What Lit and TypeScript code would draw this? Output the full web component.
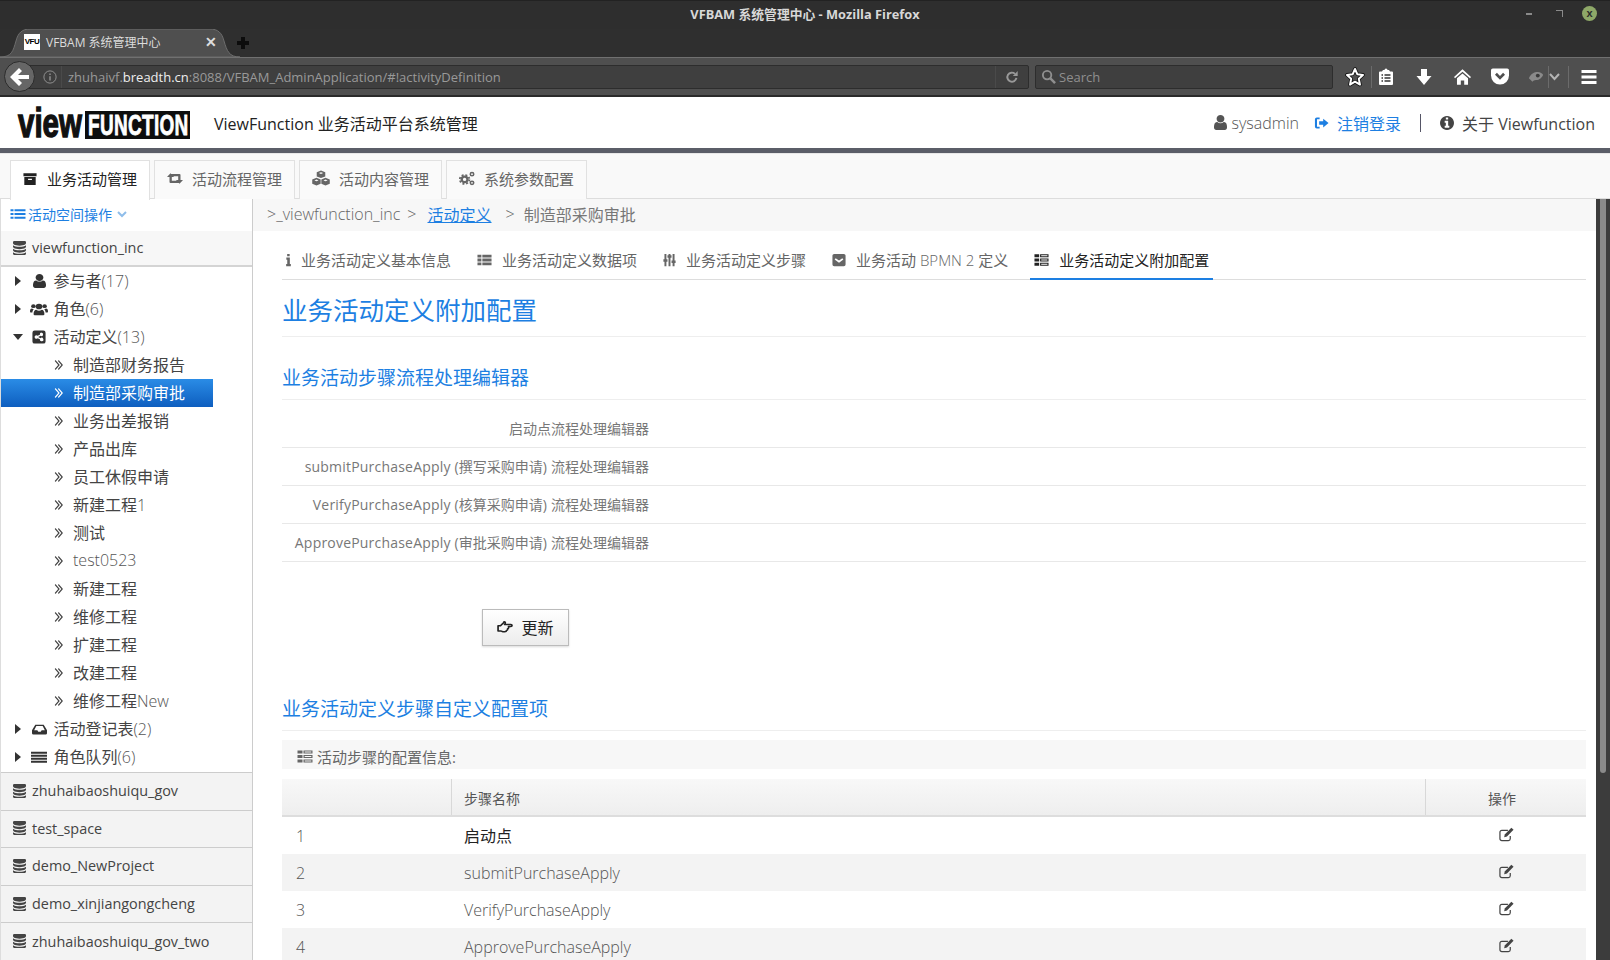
import { LitElement, css, html, svg } from "lit";
import { customElement } from "lit/decorators.js";

// font awesome 4 outlines, viewBox cropped to the glyph; rougher ones on a 16 grid
const G = "0 0 16 16";
const ICONS: Record<string, [string, unknown]> = {
  user: ["256 128 1280 1536", svg`<path d="M1536 1399q0 109-62.5 187t-150.5 78h-854q-88 0-150.5-78t-62.5-187q0-85 8.5-160.5t31.5-152 58.5-131 94-89 134.5-34.5q131 128 313 128t313-128q76 0 134.5 34.5t94 89 58.5 131 31.5 152 8.5 160.5zm-256-887q0 159-112.5 271.5t-271.5 112.5-271.5-112.5-112.5-271.5 112.5-271.5 271.5-112.5 271.5 112.5 112.5 271.5z"/>`],
  database: ["128 128 1536 1536", svg`<path d="M896 768q237 0 443-43t325-127v170q0 69-103 128t-280 93.5-385 34.5-385-34.5-280-93.5-103-128v-170q119 84 325 127t443 43zm0 768q237 0 443-43t325-127v170q0 69-103 128t-280 93.5-385 34.5-385-34.5-280-93.5-103-128v-170q119 84 325 127t443 43zm0-384q237 0 443-43t325-127v170q0 69-103 128t-280 93.5-385 34.5-385-34.5-280-93.5-103-128v-170q119 84 325 127t443 43zm0-1152q208 0 385 34.5t280 93.5 103 128v128q0 69-103 128t-280 93.5-385 34.5-385-34.5-280-93.5-103-128v-128q0-69 103-128t280-93.5 385-34.5z"/>`],
  info: ["128 128 1536 1536", svg`<path d="M1152 1376v-160q0-14-9-23t-23-9h-96v-512q0-14-9-23t-23-9h-320q-14 0-23 9t-9 23v160q0 14 9 23t23 9h96v320h-96q-14 0-23 9t-9 23v160q0 14 9 23t23 9h448q14 0 23-9t9-23zm-128-896v-160q0-14-9-23t-23-9h-192q-14 0-23 9t-9 23v160q0 14 9 23t23 9h192q14 0 23-9t9-23zm640 416q0 209-103 385.5t-279.5 279.5-385.5 103-385.5-103-279.5-279.5-103-385.5 103-385.5 279.5-279.5 385.5-103 385.5 103 279.5 279.5 103 385.5z"/>`],
  dbl: ["300 440 1080 1040", svg`<path d="M979 960q0 13-10 23l-466 466q-10 10-23 10t-23-10l-50-50q-10-10-10-23t10-23l393-393-393-393q-10-10-10-23t10-23l50-50q10-10 23-10t23 10l466 466q10 10 10 23zm384 0q0 13-10 23l-466 466q-10 10-23 10t-23-10l-50-50q-10-10-10-23t10-23l393-393-393-393q-10-10-10-23t10-23l50-50q10-10 23-10t23 10l466 466q10 10 10 23z"/>`],
  "i": ["0 0 6 16", svg`<path d="M1.4 1h3v2.800h-3zM.4 5.200h4.200v7.400h1.200V15H.2v-2.400h1.300v-5H.4z"/>`],
  archive: [G, svg`<path d="M.5 1.500h15v3.300H.5zM1.500 5.800h13v9h-13zm4.300 1.800v1.400h4.400V7.600z" fill-rule="evenodd"/>`],
  retweet: [G, svg`<path d="M3.500 2.500L7 6.500H4.800v4H10l2 2.300H3.500a1 1 0 0 1-1-1V6.500H0zM12.500 13.500L9 9.500h2.200v-4H6L4 3.200h8.500a1 1 0 0 1 1 1v5.300H16z"/>`],
  cubes: [G, svg`<path d="M8 .4l3.800 1.600v4L8 7.600 4.200 6V2zM4 7.400l3.700 1.500v4L4 14.600.2 12.900v-4zM12 7.400l3.800 1.500v4L12 14.600l-3.700-1.700v-4z"/><path d="M8 2.100l1.900.8L8 3.700l-1.900-.8zM4 9l1.800.8L4 10.600l-1.900-.8zM12 9l1.900.8-1.900.8-1.800-.8z" fill="#fafafa"/>`],
  cogs: [G, svg`<circle cx="5.600" cy="9" r="2.900" fill="none" stroke="currentColor" stroke-width="2.400"/><circle cx="5.600" cy="9" r="4.800" fill="none" stroke="currentColor" stroke-width="1.800" stroke-dasharray="2 1.800"/><circle cx="13" cy="3.400" r="1.700" fill="none" stroke="currentColor" stroke-width="1.600"/><circle cx="13" cy="12.600" r="1.700" fill="none" stroke="currentColor" stroke-width="1.600"/>`],
  users: [G, svg`<circle cx="8" cy="4.800" r="3"/><circle cx="3" cy="4.400" r="2"/><circle cx="13" cy="4.400" r="2"/><path d="M4 14c-.6-.2-.8-.6-.8-1.300 0-2.600.9-4.400 2.400-4.400.7.6 1.500.9 2.400.9s1.700-.3 2.400-.9c1.500 0 2.400 1.800 2.400 4.400 0 .7-.2 1.100-.8 1.300zM0 9.800c0-1.800.5-3 1.800-3 .5.5 1 .7 1.700.7-.7.7-1.300 2-1.400 3.800H.8c-.5 0-.8-.5-.8-1.500zM16 9.800c0-1.800-.5-3-1.800-3-.5.5-1 .7-1.700.7.7.7 1.300 2 1.400 3.800h1.300c.5 0 .8-.5.8-1.500z"/>`],
  share: [G, svg`<path fill-rule="evenodd" d="M3 .5h10A2.500 2.500 0 0 1 15.500 3v10a2.500 2.500 0 0 1-2.500 2.500H3A2.500 2.500 0 0 1 .5 13V3A2.500 2.500 0 0 1 3 .5zM11 3a2 2 0 0 0-2 2.300L6.400 6.600a2 2 0 1 0 0 2.800L9 10.700a2 2 0 1 0 .7-1.400L7.100 8l2.600-1.300A2 2 0 1 0 11 3z"/>`],
  inbox: [G, svg`<path fill-rule="evenodd" d="M3.500 2h9L16 9v3.500a1.500 1.500 0 0 1-1.500 1.500h-13A1.500 1.500 0 0 1 0 12.500V9zM4.600 3.800L2.300 8.800h3.400l1 2h2.600l1-2h3.400l-2.300-5z"/>`],
  lines: [G, svg`<path d="M0 2h16v2.400H0zM0 5.400h16v2.400H0zM0 8.800h16v2.400H0zM0 12.200h16v2.400H0z"/>`],
  list: [G, svg`<path d="M.5 2.500h3v2.400h-3zM4.500 2.500h11v2.400h-11zM.5 6.800h3v2.400h-3zM4.500 6.800h11v2.400h-11zM.5 11.100h3v2.400h-3zM4.500 11.100h11v2.400h-11z"/>`],
  thlist: [G, svg`<path d="M.5 2h4.200v3.200H.5zM5.700 2h9.800v3.200H5.700zM.5 6.400h4.200v3.200H.5zM5.700 6.400h9.800v3.200H5.700zM.5 10.800h4.200V14H.5zM5.700 10.800h9.800V14H5.700z"/>`],
  sliders: [G, svg`<path d="M1.800 1h2.400v6h1.300v3H4.200v5H1.800v-5H.5V7h1.300zM6.800 1h2.400v1.500h1.300v3H9.200V15H6.800V5.500H5.500v-3h1.300zM11.800 1h2.400v7.500h1.300v3h-1.300V15h-2.400v-3.500h-1.300v-3h1.300z"/>`],
  pocketbox: [G, svg`<path fill-rule="evenodd" d="M2.500 1h11A2 2 0 0 1 15.500 3v10a2 2 0 0 1-2 2h-11a2 2 0 0 1-2-2V3a2 2 0 0 1 2-2zM4.200 6L3 7.300 8 11l5-3.700L11.800 6 8 8.700z"/>`],
  tasksel: [G, svg`<path fill-rule="evenodd" d="M.5 1.500h5v3.400h-5zM.5 6.300h5v3.400h-5zM.5 11.100h5v3.400h-5zM6.500 1.500h9v3.400h-9zM7.700 2.700v1h6.600v-1zM6.500 6.300h9v3.400h-9zM7.700 7.500v1h6.600v-1zM6.500 11.100h9v3.400h-9zM7.700 12.300v1h6.600v-1z"/>`],
  edit: [G, svg`<path fill="none" stroke="currentColor" stroke-width="1.300" d="M12 9.500v3a2 2 0 0 1-2 2H3a2 2 0 0 1-2-2V5.500a2 2 0 0 1 2-2h6.500"/><path d="M13.200.8l2.300 2.200-7 7.200-3 .7.600-3z"/>`],
  hand: [G, svg`<path fill="none" stroke="currentColor" stroke-width="1.600" stroke-linejoin="round" d="M1 7.200h2.300l2.400-2.600c.6-.8.500-1.800 1.200-1.800s1.200.9.700 2.100l-.5 1h6c1.400 0 1.400 2 0 2h-2.300c.4 1.500-.1 2.300-.8 2.500.2 1-.3 1.700-1 1.800-.1.800-.7 1.300-1.600 1.300H5.500c-1 0-1.500-.8-2.200-.8H1z"/>`],
  signout: [G, svg`<path d="M6 1.800v2H3.200v8.400H6v2H3A2 2 0 0 1 1 12.200V3.800a2 2 0 0 1 2-2zM9.800 3L15.500 8l-5.700 5V10H5.500V6h4.300z"/>`],
};

const ic = (name: string, w = 14, h = 14) => {
  const [vb, body] = ICONS[name];
  return html`<svg class="ic" width=${w} height=${h} viewBox=${vb} preserveAspectRatio="none" fill="currentColor">${body}</svg>`;
};

// latin runs are the light weight of the page font, chinese stays regular
const mix = (text: string) =>
  text.split(/([\x20-\x7e]+)/).map((part, i) => (i % 2 ? html`<span class="lat">${part}</span>` : part));

const MAIN_TABS = [
  ["archive", "业务活动管理", 14, 14],
  ["retweet", "活动流程管理", 16, 15],
  ["cubes", "活动内容管理", 18, 17],
  ["cogs", "系统参数配置", 16, 15],
] as const;

const CHILDREN = ["制造部财务报告", "制造部采购审批", "业务出差报销", "产品出库", "员工休假申请", "新建工程1", "测试", "test0523", "新建工程", "维修工程", "扩建工程", "改建工程", "维修工程New"];
const SPACES = ["zhuhaibaoshuiqu_gov", "test_space", "demo_NewProject", "demo_xinjiangongcheng", "zhuhaibaoshuiqu_gov_two"];

const INNER_TABS = [
  ["i", "业务活动定义基本信息", 5],
  ["thlist", "业务活动定义数据项", 15],
  ["sliders", "业务活动定义步骤", 13],
  ["pocketbox", "业务活动 BPMN 2 定义", 14],
  ["tasksel", "业务活动定义附加配置", 15],
] as const;

const EDITORS = ["启动点流程处理编辑器", "submitPurchaseApply (撰写采购申请) 流程处理编辑器", "VerifyPurchaseApply (核算采购申请) 流程处理编辑器", "ApprovePurchaseApply (审批采购申请) 流程处理编辑器"];
const STEPS = ["启动点", "submitPurchaseApply", "VerifyPurchaseApply", "ApprovePurchaseApply"];

@customElement("app-root")
export class AppRoot extends LitElement {
  static styles = css`
    :host {
      display: block;
      width: 1610px;
      height: 960px;
      overflow: hidden;
      background: #fff;
      color: #444;
      font-family: "Open Sans", "Noto Sans CJK SC", sans-serif;
      font-size: 14px;
    }
    .ic { flex: none; display: block; }
    .lat { font-weight: 300; }

    /* firefox chrome */
    .title {
      height: 29px;
      background: #2e2e2e;
      border-top: 1px solid #222;
      box-sizing: border-box;
      padding-bottom: 4px;
      display: flex;
      align-items: center;
      justify-content: center;
      position: relative;
      color: #d8d8d8;
      font-size: 12.8px;
      font-weight: 700;
    }
    .winbtns { position: absolute; right: 13px; top: 5px; display: flex; align-items: center; gap: 19px; color: #999; }
    .winbtns i { display: block; width: 6px; height: 2px; background: #8a8a8a; margin-right: 5px; }
    .winbtns b.rs { display: block; width: 6px; height: 6px; border-top: 1px solid #8a8a8a; border-right: 1px solid #8a8a8a; }
    .close { width: 15px; height: 15px; border-radius: 50%; background: #8ea868; color: #2b2b2b; font: 700 11px/15px "Liberation Sans", sans-serif; text-align: center; }
    .strip { height: 28px; background: #2f2f2f; display: flex; position: relative; }
    .tabshape { position: absolute; left: 0; top: 0; }
    .ftab { position: relative; width: 228px; display: flex; align-items: center; padding: 0 0 2px 24px; box-sizing: border-box; gap: 6px; color: #dcdcdc; font-size: 12px; height: 28px; }
    .fav { width: 16px; height: 16px; background: #fff; color: #000; font: 900 8px/16px "Liberation Sans", sans-serif; text-align: center; letter-spacing: -0.5px; }
    .ftab .x { margin-left: auto; margin-right: 11px; color: #ddd; font: 700 14px/1 "Liberation Sans", sans-serif; }
    .plus { align-self: center; margin-left: 9px; width: 12px; height: 12px; position: relative; }
    .plus::before, .plus::after { content: ""; position: absolute; background: #0c0c0c; }
    .plus::before { left: 4px; top: 0; width: 4px; height: 12px; }
    .plus::after { left: 0; top: 4px; width: 12px; height: 4px; }
    .nav {
      height: 40px;
      box-sizing: border-box;
      background: #4f4f4f;
      border-top: 1px solid #707070;
      border-bottom: 2px solid #2a2a2a;
      display: flex;
      align-items: center;
      position: relative;
      color: #f2f2f2;
      padding-left: 20px;
    }
    .back { position: absolute; left: 4px; top: 3px; width: 31px; height: 31px; box-sizing: border-box; border-radius: 50%; background: #666; border: 1px solid #2c2c2c; display: flex; align-items: center; justify-content: center; color: #fff; }
    .field { height: 24px; box-sizing: border-box; background: #3f3f3f; border: 1px solid #2d2d2d; border-radius: 2px; display: flex; align-items: center; }
    .url { width: 1009px; padding-left: 22px; font-size: 13px; color: #999; }
    .url .ifo { color: #9a9a9a; margin-right: 4px; }
    .url .addr { white-space: nowrap; }
    .url .host { color: #eee; }
    .url .vsep { width: 1px; height: 22px; background: #4a4a4a; margin-right: 6px; }
    .url .rel { margin-left: auto; width: 33px; height: 22px; border-left: 1px solid #4a4a4a; display: flex; align-items: center; justify-content: center; color: #999; box-sizing: border-box; }
    .search { width: 298px; margin-left: 6px; padding-left: 5px; gap: 3px; color: #8f8f8f; font-size: 13px; }
    .tools { display: grid; grid-template-columns: 32px 1px 28px 48px 28px 48px 24px 1px 10px 9px 1px 40px; margin-left: 6px; height: 100%; align-items: center; justify-items: center; }
    .tools .s { width: 1px; height: 22px; background: #6b6b6b; }

    /* app header */
    .head { height: 51px; display: flex; align-items: center; padding-left: 18px; background: #fff; }
    .logo { width: 172px; height: 32px; display: flex; align-items: flex-end; font-family: "Liberation Sans", sans-serif; font-weight: 700; }
    .logo .v { width: 67px; color: #111; font-size: 29.5px; line-height: 30px; transform: translateY(5px) scaleY(1.4); transform-origin: bottom; -webkit-text-stroke: 1px #111; }
    .logo .f { width: 105px; height: 28px; box-sizing: border-box; padding-left: 3px; background: #0d0d0d; color: #fff; font-size: 19px; line-height: 28px; letter-spacing: 0.3px; }
    .logo .f span { display: block; transform: scaleY(1.6); transform-origin: center; -webkit-text-stroke: 0.5px #fff; }
    .apptitle { margin-left: 24px; font-size: 16px; color: #222; }
    .right { margin-left: auto; padding-right: 15px; display: flex; align-items: center; font-size: 16px; color: #555; }
    .right .lat { font-weight: 300; }
    .right .sys { margin-left: 5px; margin-right: 15px; }
    .right .out { color: #1d7fe2; display: flex; align-items: center; gap: 8px; }
    .right .pipe { width: 1px; height: 18px; background: #556; margin: 0 19px; }
    .right .about { display: flex; align-items: center; gap: 8px; color: #444; }
    .bar { height: 5px; background: #5b5e68; }

    .mtabs { height: 46px; box-sizing: border-box; background: #f9f9f9; border-top: 1px solid #e8e8e8; border-bottom: 1px solid #ddd; padding: 6px 0 0 10px; display: flex; gap: 4px; }
    .mtab { height: 39px; box-sizing: border-box; border: 1px solid #e1e1e1; border-bottom: none; display: flex; align-items: center; padding: 0 12px 3px; gap: 9px; font-size: 15px; color: #666; background: #fafafa; }
    .mtab.on { background: #fff; color: #222; height: 40px; z-index: 1; padding-bottom: 4px; gap: 10px; }

    .body { display: flex; height: 761px; }
    .side { width: 253px; flex: none; box-sizing: border-box; border-right: 1px solid #ccc; border-left: 1px solid #ddd; display: flex; flex-direction: column; }
    .ops { height: 32px; box-sizing: border-box; padding: 0 0 2px 9px; display: flex; align-items: center; gap: 2px; color: #1d7fe2; font-size: 14px; }
    .ops .chev { margin-left: 3px; color: #8fbdea; }
    .ws { height: 36px; box-sizing: border-box; background: #f7f7f7; border-bottom: 2px solid #d4d4d4; display: flex; align-items: center; padding: 0 0 1px 12px; gap: 6px; font-size: 14.4px; color: #444; }
    .tree { padding-bottom: 1px; }
    .row { height: 28px; display: flex; align-items: center; font-size: 16px; color: #444; }
    .row > span:last-child { margin-top: -2px; }
    .row .lat { color: #555; }
    .caret { width: 0; height: 0; margin-left: 14px; border-left: 6px solid #333; border-top: 5px solid transparent; border-bottom: 5px solid transparent; }
    .caret.open { margin-left: 12px; margin-right: -2px; border-top: 6px solid #333; border-left: 5px solid transparent; border-right: 5px solid transparent; border-bottom: none; }
    .ricon { width: 16px; margin-left: 10px; margin-right: 6.5px; display: flex; justify-content: center; color: #333; }
    .kid { padding-left: 53px; gap: 10px; }
    .kid .ic { color: #444; }
    .kid.sel { width: 212px; box-sizing: border-box; background: linear-gradient(#2a8ce6, #0e5ebf); color: #fff; }
    .kid.sel .ic { color: #fff; }
    .spaces { flex: 1; display: flex; flex-direction: column; }
    .space { flex: 1; background: #f3f3f3; border-top: 1px solid #ccc; display: flex; align-items: center; padding: 0 0 1px 12px; gap: 6px; font-size: 14.4px; color: #444; }

    .main { flex: 1; min-width: 0; display: flex; flex-direction: column; }
    .crumb { height: 32px; flex: none; box-sizing: border-box; background: #f7f7f7; display: flex; align-items: center; padding: 0 0 3px 14px; font-size: 16px; color: #666; }
    .crumb a { color: #1d7fe2; text-decoration: underline; margin: 0 14px 0 11px; }
    .crumb .arrow { margin-left: 7px; }
    .crumb .last { margin-left: 9px; color: #777; }
    .content { padding: 0 10px 0 29px; }
    .itabs { height: 49px; box-sizing: border-box; border-bottom: 1px solid #ddd; display: flex; gap: 18px; }
    .itab { height: 49px; box-sizing: border-box; display: flex; align-items: center; padding: 8px 4px 0; gap: 10px; font-size: 15px; color: #666; }
    .itab.on { color: #222; border-bottom: 2px solid #1d7fe2; padding-top: 10px; }
    h1 { margin: 0; height: 57px; box-sizing: border-box; border-bottom: 1px solid #eee; font-size: 25.5px; font-weight: 400; line-height: 60px; color: #1d7fe2; }
    h3 { margin: 0; box-sizing: border-box; border-bottom: 1px solid #eee; font-size: 19px; font-weight: 400; line-height: 26px; padding-bottom: 8px; color: #1d7fe2; }
    h3.a { padding-top: 28px; }
    h3.b { padding-top: 50px; }
    .form { margin-top: 10px; }
    .frow { height: 38px; box-sizing: border-box; border-bottom: 1px solid #e8e8e8; display: flex; align-items: center; justify-content: flex-start; color: #777; }
    .frow div { width: 367px; text-align: right; padding-bottom: 1px; }
    .frow .lat { font-weight: 400; letter-spacing: 0.2px; }
    .update { margin: 47px 0 0 200px; width: 87px; height: 37px; box-sizing: border-box; padding-bottom: 2px; border: 1px solid #bbb; background: linear-gradient(#fff, #ececec); box-shadow: 0 1px 2px rgba(0, 0, 0, 0.15); display: flex; align-items: center; justify-content: center; gap: 7px; font-size: 16px; color: #222; }
    .cap { margin-top: 9px; height: 29px; box-sizing: border-box; background: #f7f7f7; display: flex; align-items: center; padding: 4px 0 0 15px; gap: 4px; font-size: 15px; color: #666; }
    .grid { margin-top: 10px; }
    .tr { display: grid; grid-template-columns: 169px 1fr 161px; height: 37px; align-items: center; font-size: 16px; }
    .th { height: 38px; background: linear-gradient(#f8f8f8, #eee); border-bottom: 2px solid #ddd; box-sizing: border-box; font-size: 14px; color: #555; align-items: stretch; }
    .th div { display: flex; align-items: center; padding: 2px 0 0 12px; border-left: 1px solid #d8d8d8; }
    .th div:first-child { border-left: none; }
    .th div:last-child { justify-content: center; padding: 2px 8px 0 0; }
    .tr.alt { background: #f3f3f3; }
    .tr .n { padding-left: 14px; color: #555; font-weight: 300; }
    .tr .s { padding-left: 13px; color: #555; }
    .tr .s.first { color: #222; padding-bottom: 2px; }
    .tr .e { display: flex; justify-content: center; padding: 0 0 3px 2px; color: #444; }
    .scroll { width: 14px; flex: none; background: #3c3c3c; padding-left: 4px; box-sizing: border-box; }
    .scroll div { width: 6px; height: 574px; background: #8a8a8a; border-radius: 0 0 3px 3px; }
  `;

  renderChrome() {
    return html`
      <div class="title">
        VFBAM 系统管理中心 - Mozilla Firefox
        <div class="winbtns"><i></i><b class="rs"></b><div class="close">x</div></div>
      </div>
      <div class="strip">
        <svg class="tabshape" width="240" height="28" viewBox="0 0 240 28"><path d="M0 28c12 0 13-6 16-16C18 4 22 0 30 0h180c8 0 12 4 14 12 3 10 5 16 16 16z" fill="#4f4f4f" stroke="#6d6d6d"/></svg>
        <div class="ftab"><div class="fav">VFU</div>VFBAM 系统管理中心<span class="x">✕</span></div>
        <div class="plus"></div>
      </div>
      <div class="nav">
        <div class="back"><svg width="20" height="18" viewBox="0 0 20 18" fill="currentColor"><path d="M9 0l3 3-4 4h11v4H8l4 4-3 3-9-9z"/></svg></div>
        <div class="field url">
          <span class="ifo"><svg class="ic" width="14" height="14" viewBox="0 0 16 16" fill="none" stroke="currentColor"><circle cx="8" cy="8" r="7"/><path d="M8 7v5M8 4v1.600" stroke-width="1.500"/></svg></span>
          <span class="vsep"></span>
          <span class="addr">zhuhaivf.<span class="host">breadth.cn</span>:8088/VFBAM_AdminApplication/#!activityDefinition</span>
          <span class="rel"><svg class="ic" width="14" height="14" viewBox="0 0 16 16" fill="none" stroke="currentColor" stroke-width="2.200"><path d="M13 9a5.200 5.200 0 1 1-1.600-4.600"/><path d="M14.500 1.200v5.600H9z" fill="currentColor" stroke="none"/></svg></span>
        </div>
        <div class="field search">
          <svg class="ic" width="15" height="15" viewBox="0 0 16 16" fill="none" stroke="currentColor" stroke-width="2"><circle cx="6.500" cy="6.500" r="4.500"/><path d="M10 10l5 5" stroke-width="2.600"/></svg>
          Search
        </div>
        <div class="tools">
          <svg width="20" height="20" viewBox="0 0 20 20" fill="none" stroke="#fff" stroke-width="2" stroke-linejoin="round"><path d="M10 2l2.400 5.300 5.600.6-4.200 3.900 1.200 5.800L10 14.700l-5 2.900 1.200-5.800L2 7.900l5.600-.6z" stroke="#111" stroke-width="3.600"/><path d="M10 2l2.400 5.300 5.600.6-4.200 3.900 1.200 5.800L10 14.700l-5 2.900 1.200-5.800L2 7.900l5.600-.6z"/></svg>
          <span class="s"></span>
          <svg width="16" height="18" viewBox="0 0 16 18"><path d="M5 2h1.500a1.500 1.500 0 0 1 3 0H11l1 1.600h2a1 1 0 0 1 1 1V16a1 1 0 0 1-1 1H2a1 1 0 0 1-1-1V4.600a1 1 0 0 1 1-1h2z" fill="#fff"/><path d="M3.500 7H5M6.500 7h6M3.500 10H5M6.500 10h6M3.500 13H5M6.500 13h6" stroke="#333" stroke-width="1.300"/></svg>
          <svg width="16" height="18" viewBox="0 0 16 18" fill="#fff"><path d="M5 1h6v7h4.500L8 17 .5 8H5z"/></svg>
          <svg width="17" height="16" viewBox="0 0 20 18" fill="#fff"><path d="M10 0l10 9-1.200 1.500L10 2.800 1.200 10.500 0 9zM3.500 10.500L10 5l6.500 5.500V18H12v-5H8v5H3.500z"/></svg>
          <svg width="18" height="17" viewBox="0 0 20 18"><path d="M2 0h16a2 2 0 0 1 2 2v6a10 10 0 0 1-20 0V2a2 2 0 0 1 2-2z" fill="#fff"/><path d="M5.500 6L10 10.500 14.500 6" fill="none" stroke="#4f4f4f" stroke-width="3"/></svg>
          <svg width="16" height="13" viewBox="0 0 18 14" fill="#8a8a8a"><path d="M1 9c2-5 6-7 10-7 3 0 5 2 6 3-1 3-4 6-8 6-2 0-3 1-4 2z"/><circle cx="11" cy="6" r="2.200" fill="#3a3a3a"/></svg>
          <span class="s"></span>
          <svg width="11" height="8" viewBox="0 0 11 8" fill="none" stroke="#b5b5b5" stroke-width="2"><path d="M1 1l4.500 5L10 1"/></svg>
          <span></span>
          <span class="s"></span>
          <svg width="18" height="16" viewBox="0 0 18 16"><path d="M1.500 1h15v3h-15zM1.500 6.500h15v3h-15zM1.500 12h15v3h-15z" fill="#fff"/></svg>
        </div>
      </div>
    `;
  }

  renderSide() {
    return html`
      <div class="side">
        <div class="ops">${ic("list", 16, 14)}活动空间操作<svg class="chev ic" width="10" height="7" viewBox="0 0 10 7" fill="none" stroke="currentColor" stroke-width="2"><path d="M1 1l4 4 4-4"/></svg></div>
        <div class="ws">${ic("database", 13, 14)}<span>viewfunction_inc</span></div>
        <div class="tree">
          <div class="row"><span class="caret"></span><span class="ricon">${ic("user", 13, 14)}</span><span>${mix("参与者(17)")}</span></div>
          <div class="row"><span class="caret"></span><span class="ricon">${ic("users", 18, 15)}</span><span>${mix("角色(6)")}</span></div>
          <div class="row"><span class="caret open"></span><span class="ricon">${ic("share", 14, 14)}</span><span>${mix("活动定义(13)")}</span></div>
          ${CHILDREN.map(
            (c, i) => html`<div class="row kid ${i === 1 ? "sel" : ""}">${ic("dbl", 9, 10)}<span>${mix(c)}</span></div>`
          )}
          <div class="row"><span class="caret"></span><span class="ricon">${ic("inbox", 15, 13)}</span><span>${mix("活动登记表(2)")}</span></div>
          <div class="row"><span class="caret"></span><span class="ricon">${ic("lines", 16, 14)}</span><span>${mix("角色队列(6)")}</span></div>
        </div>
        <div class="spaces">
          ${SPACES.map((s) => html`<div class="space">${ic("database", 13, 14)}<span>${s}</span></div>`)}
        </div>
      </div>
    `;
  }

  renderMain() {
    return html`
      <div class="main">
        <div class="crumb"><span class="lat">&gt;_viewfunction_inc</span><span class="lat arrow">&gt;</span><a>活动定义</a><span class="lat">&gt;</span><span class="last">制造部采购审批</span></div>
        <div class="content">
          <div class="itabs">
            ${INNER_TABS.map(
              ([icon, label, w], i) => html`<div class="itab ${i === 4 ? "on" : ""}">${ic(icon, w, 14)}<span>${mix(label)}</span></div>`
            )}
          </div>
          <h1>业务活动定义附加配置</h1>
          <h3 class="a">业务活动步骤流程处理编辑器</h3>
          <div class="form">
            ${EDITORS.map((e) => html`<div class="frow"><div>${mix(e)}</div></div>`)}
          </div>
          <div class="update">${ic("hand", 17, 15)}更新</div>
          <h3 class="b">业务活动定义步骤自定义配置项</h3>
          <div class="cap">${ic("tasksel", 16, 15)}活动步骤的配置信息:</div>
          <div class="grid">
            <div class="tr th"><div></div><div>步骤名称</div><div>操作</div></div>
            ${STEPS.map(
              (s, i) => html`<div class="tr ${i % 2 ? "alt" : ""}">
                <div class="n">${i + 1}</div>
                <div class="s ${i === 0 ? "first" : ""}">${mix(s)}</div>
                <div class="e">${ic("edit", 15, 15)}</div>
              </div>`
            )}
          </div>
        </div>
      </div>
      <div class="scroll"><div></div></div>
    `;
  }

  render() {
    return html`
      ${this.renderChrome()}
      <div class="head">
        <div class="logo"><div class="v">view</div><div class="f"><span>FUNCTION</span></div></div>
        <div class="apptitle">ViewFunction 业务活动平台系统管理</div>
        <div class="right">
          ${ic("user", 13, 15)}<span class="sys lat">sysadmin</span>
          <span class="out">${ic("signout", 15, 14)}注销登录</span>
          <span class="pipe"></span>
          <span class="about">${ic("info", 14, 14)}关于 Viewfunction</span>
        </div>
      </div>
      <div class="bar"></div>
      <div class="mtabs">
        ${MAIN_TABS.map(
          ([icon, label, w, h], i) => html`<div class="mtab ${i === 0 ? "on" : ""}">${ic(icon, w, h)}<span>${label}</span></div>`
        )}
      </div>
      <div class="body">${this.renderSide()}${this.renderMain()}</div>
    `;
  }
}
